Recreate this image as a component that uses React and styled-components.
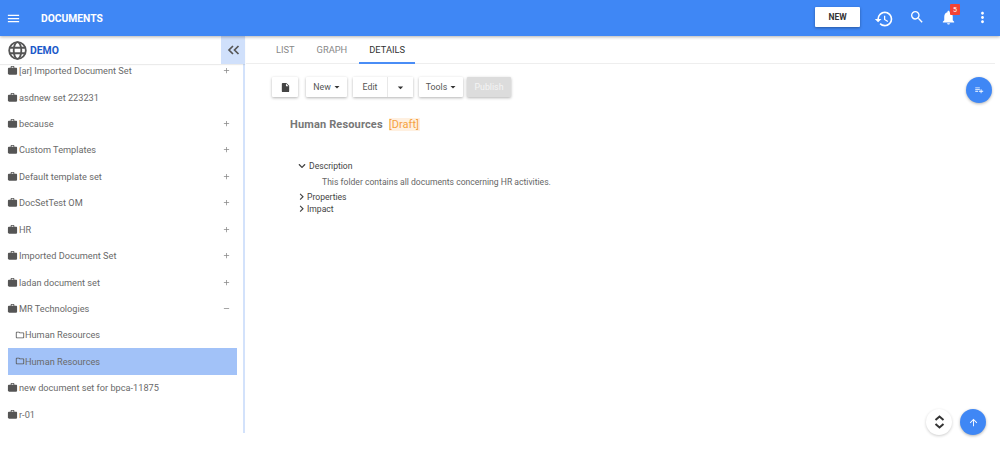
import React from "react";
import styled, { createGlobalStyle } from "styled-components";
import { MdMenu, MdHistory, MdSearch, MdNotifications, MdMoreVert, MdWork, MdOutlineFolder, MdInsertDriveFile, MdAdd, MdRemove, MdArrowDropDown, MdArrowUpward, MdPlaylistAdd } from "react-icons/md";
import { FaChevronDown, FaChevronRight } from "react-icons/fa";

const Global = createGlobalStyle`
  html, body { margin: 0; padding: 0; background: #fff; height: 449px; overflow: hidden; }
  body { font-family: Roboto, "Liberation Sans", sans-serif; }
  * { box-sizing: border-box; }
`;

const Page = styled.div`display: flex; flex-direction: column; width: 1000px; height: 449px; position: relative;`;
const Header = styled.header`
  height: 36px; background: #3f87f5; display: flex; align-items: center; color: #fff;
  box-shadow: 0 1px 3px rgba(0,0,0,.3); position: relative; z-index: 2; padding: 0 9px 0 6px;
`;
const Title = styled.div`font-size: 10.3px; font-weight: 700; margin-left: 20px; flex: 1;`;
const NewButton = styled.button`
  width: 45px; height: 20px; border: 0; background: #fff; border-radius: 1px; color: #333; font: 700 8.5px Roboto, sans-serif;
  box-shadow: 0 1px 3px rgba(0,0,0,.35); padding: 0; margin-right: 14px; margin-top: -2px;
`;
const HeadIcon = styled.span`display: flex; position: relative; margin-right: ${p => p.$mr}px; margin-top: ${p => p.$mt || 0}px;`;
const Badge = styled.span`
  position: absolute; top: -5px; right: -3px; width: 10px; height: 11px; background: #f44336; border-radius: 1px;
  color: #fff; font-size: 7px; display: flex; align-items: center; justify-content: center;
`;
const Body = styled.div`flex: 1; display: flex; min-height: 0;`;
const Aside = styled.aside`
  width: 245px; height: 397px; border-right: 2px solid #d3e2fb; display: flex; flex-direction: column; flex: none; position: relative;
`;
const AsideHead = styled.div`height: 28px; display: flex; align-items: center; padding-left: 8px; margin-right: -2px; box-shadow: 0 1px 1px rgba(0,0,0,.08); position: relative; z-index: 1; background:#fff;`;
const Demo = styled.span`font-size: 10.4px; font-weight: 700; color: #1b59c9; margin-left: 3px; flex: 1;`;
const Collapse = styled.div`width: 24px; height: 28px; background: #d0e0fb; display: flex; align-items: center; justify-content: center;`;
const Tree = styled.div`display: flex; flex-direction: column; padding: 0 6px 0 8px; margin-top: -6.5px;`;
const Row = styled.div`
  height: 26.43px; display: flex; align-items: center; flex: none; font-size: 9.2px; color: #6a6a6a;
  padding-left: ${p => p.$child ? 7 : 0}px; background: ${p => p.$active ? "#a2c2f8" : "transparent"};
`;
const CaseIcon = styled(MdWork)`margin-left: -1px; flex: none; color: #555;`;
const FolderIcon = styled(MdOutlineFolder)`flex: none; color: #555;`;
const RowText = styled.span`flex: 1; margin-left: ${p => p.$child ? 0 : 1}px;`;
const RowSign = styled.span`display: flex; color: #888; margin-right: 6px;`;
const Main = styled.main`flex: 1; min-width: 0; position: relative;`;
const Tabs = styled.nav`height: 28px; margin-right: 5px; margin-left: 1px; padding-left: 20px; display: flex; gap: 2px; border-bottom: 1px solid #eee; `;
const Tab = styled.div`
  height: 28px; padding: 8px 10px 0; font-size: 9.3px; color: ${p => p.$on ? "#333" : "#888"};
  border-bottom: 2px solid ${p => p.$on ? "#4a8df6" : "transparent"};
`;
const Toolbar = styled.div`display: flex; align-items: center; margin: 13px 0 0 27px; height: 20px;`;
const Btn = styled.div`
  height: 20px; background: ${p => p.$off ? "#dcdcdc" : "#fff"}; color: ${p => p.$off ? "#f4f4f4" : "#555"};
  box-shadow: 0 1px 3px rgba(0,0,0,.3); width: ${p => p.$w}px; margin-right: ${p => p.$mr || 0}px;
  display: flex; align-items: center; justify-content: center; font-size: 8.8px; border-radius: 1px;
`;
const SplitGroup = styled.div`display: flex; height: 20px; box-shadow: 0 1px 3px rgba(0,0,0,.3); margin-right: 6px; border-radius: 1px;`;
const SplitPart = styled.div`
  width: ${p => p.$w}px; background: #fff; color: #555; font-size: 8.8px; display: flex; align-items: center; justify-content: center;
  border-left: ${p => p.$divider ? "1px solid #e8e8e8" : "0"};
`;
const Caret = styled(MdArrowDropDown)`margin-right: -3px; color: #333;`;
const Heading = styled.div`margin: 20px 0 0 45px; display: flex; align-items: center; height: 14px;`;
const Name = styled.span`font-size: 11px; font-weight: 700; color: #777; letter-spacing: .15px;`;
const Draft = styled.span`font-size: 11px; color: #f5a13e; background: #fff0e0; margin-left: 6px; padding-right: 0.5px; letter-spacing: .05px;`;
const Section = styled.div`display: flex; flex-direction: column; margin: 29px 0 0 53px; color: #444; font-size: 8.6px;`;
const Sec = styled.div`display: flex; align-items: center; height: 12px; margin-top: ${p => p.$mt || 0}px;`;
const SecLabel = styled.span`margin-left: ${p => p.$ml}px;`;
const SecBody = styled.div`margin: 4px 0 0 24px; height: 12px; color: #666; font-size: 8.6px; line-height: 12px;`;
const Fab = styled.div`
  position: absolute; left: ${p => p.$x - 13}px; top: ${p => p.$y - 13}px; width: 26px; height: 26px; border-radius: 50%;
  background: ${p => p.$white ? "#fff" : "#3f87f5"}; color: ${p => p.$white ? "#333" : "#fff"};
  box-shadow: 0 1px 3px rgba(0,0,0,${p => p.$white ? .2 : .3}); display: flex; align-items: center; justify-content: center;
`;

const Globe = () => (
  <svg width="19" height="19" viewBox="0 0 24 24" fill="none" stroke="#555" strokeWidth="2.3">
    <circle cx="12" cy="12" r="10.5" />
    <ellipse cx="12" cy="12" rx="4.8" ry="10.5" />
    <path d="M2 8.5h20M2 15.5h20" />
  </svg>
);

const DoubleChevron = () => (
  <svg width="13" height="10" viewBox="0 0 13 10" fill="none" stroke="#555" strokeWidth="1.7">
    <path d="M6 1 2 5l4 4M11.5 1l-4 4 4 4" />
  </svg>
);

const UpDown = () => (
  <svg width="11" height="14" viewBox="0 0 11 14" fill="none" stroke="#333" strokeWidth="2">
    <path d="M1.5 5 5.5 1.5 9.5 5M1.5 9l4 3.5 4-3.5" />
  </svg>
);

const rows = [
  ["[ar] Imported Document Set", "+"], ["asdnew set 223231"], ["because", "+"], ["Custom Templates", "+"],
  ["Default template set", "+"], ["DocSetTest OM", "+"], ["HR", "+"], ["Imported Document Set", "+"],
  ["ladan document set", "+"], ["MR Technologies", "-"], ["Human Resources", null, "child"],
  ["Human Resources", null, "active"], ["new document set for bpca-11875"], ["r-01"],
];

export default function App() {
  return (
    <Page>
      <Global />
      <Header>
        <MdMenu size={15} />
        <Title>DOCUMENTS</Title>
        <NewButton>NEW</NewButton>
        <HeadIcon $mr={15} $mt={1}><MdHistory size={20} /></HeadIcon>
        <HeadIcon $mr={15} $mt={-2}><MdSearch size={16} /></HeadIcon>
        <HeadIcon $mr={17} $mt={-1}><MdNotifications size={17} /><Badge>5</Badge></HeadIcon>
        <HeadIcon $mr={0} $mt={-1}><MdMoreVert size={17} /></HeadIcon>
      </Header>
      <Body>
        <Aside>
          <AsideHead>
            <Globe />
            <Demo>DEMO</Demo>
            <Collapse><DoubleChevron /></Collapse>
          </AsideHead>
          <Tree>
            {rows.map(([label, sign, kind], i) => (
              <Row key={i} $child={!!kind} $active={kind === "active"}>
                {kind ? <FolderIcon size={10} /> : <CaseIcon size={11} />}
                <RowText $child={!!kind}>{label}</RowText>
                {sign && <RowSign>{sign === "+" ? <MdAdd size={9} /> : <MdRemove size={9} />}</RowSign>}
              </Row>
            ))}
          </Tree>
        </Aside>
        <Main>
          <Tabs>
            <Tab>LIST</Tab>
            <Tab>GRAPH</Tab>
            <Tab $on>DETAILS</Tab>
          </Tabs>
          <Toolbar>
            <Btn $w={26} $mr={8}><MdInsertDriveFile size={11} color="#444" /></Btn>
            <Btn $w={41} $mr={6}>New<Caret size={12} /></Btn>
            <SplitGroup>
              <SplitPart $w={34}>Edit</SplitPart>
              <SplitPart $w={26} $divider><MdArrowDropDown size={13} color="#333" /></SplitPart>
            </SplitGroup>
            <Btn $w={44} $mr={4}>Tools<Caret size={12} /></Btn>
            <Btn $w={44} $off>Publish</Btn>
          </Toolbar>
          <Heading>
            <Name>Human Resources</Name>
            <Draft>[Draft]</Draft>
          </Heading>
          <Section>
            <Sec><FaChevronDown size={8} /><SecLabel $ml={3}>Description</SecLabel></Sec>
            <SecBody>This folder contains all documents concerning HR activities.</SecBody>
            <Sec $mt={3}><FaChevronRight size={7.5} /><SecLabel $ml={1.5}>Properties</SecLabel></Sec>
            <Sec><FaChevronRight size={7.5} /><SecLabel $ml={1.5}>Impact</SecLabel></Sec>
          </Section>
        </Main>
      </Body>
      <Fab $x={979} $y={90}><MdPlaylistAdd size={10} /></Fab>
      <Fab $x={939} $y={422} $white><UpDown /></Fab>
      <Fab $x={973} $y={422}><MdArrowUpward size={11} /></Fab>
    </Page>
  );
}
